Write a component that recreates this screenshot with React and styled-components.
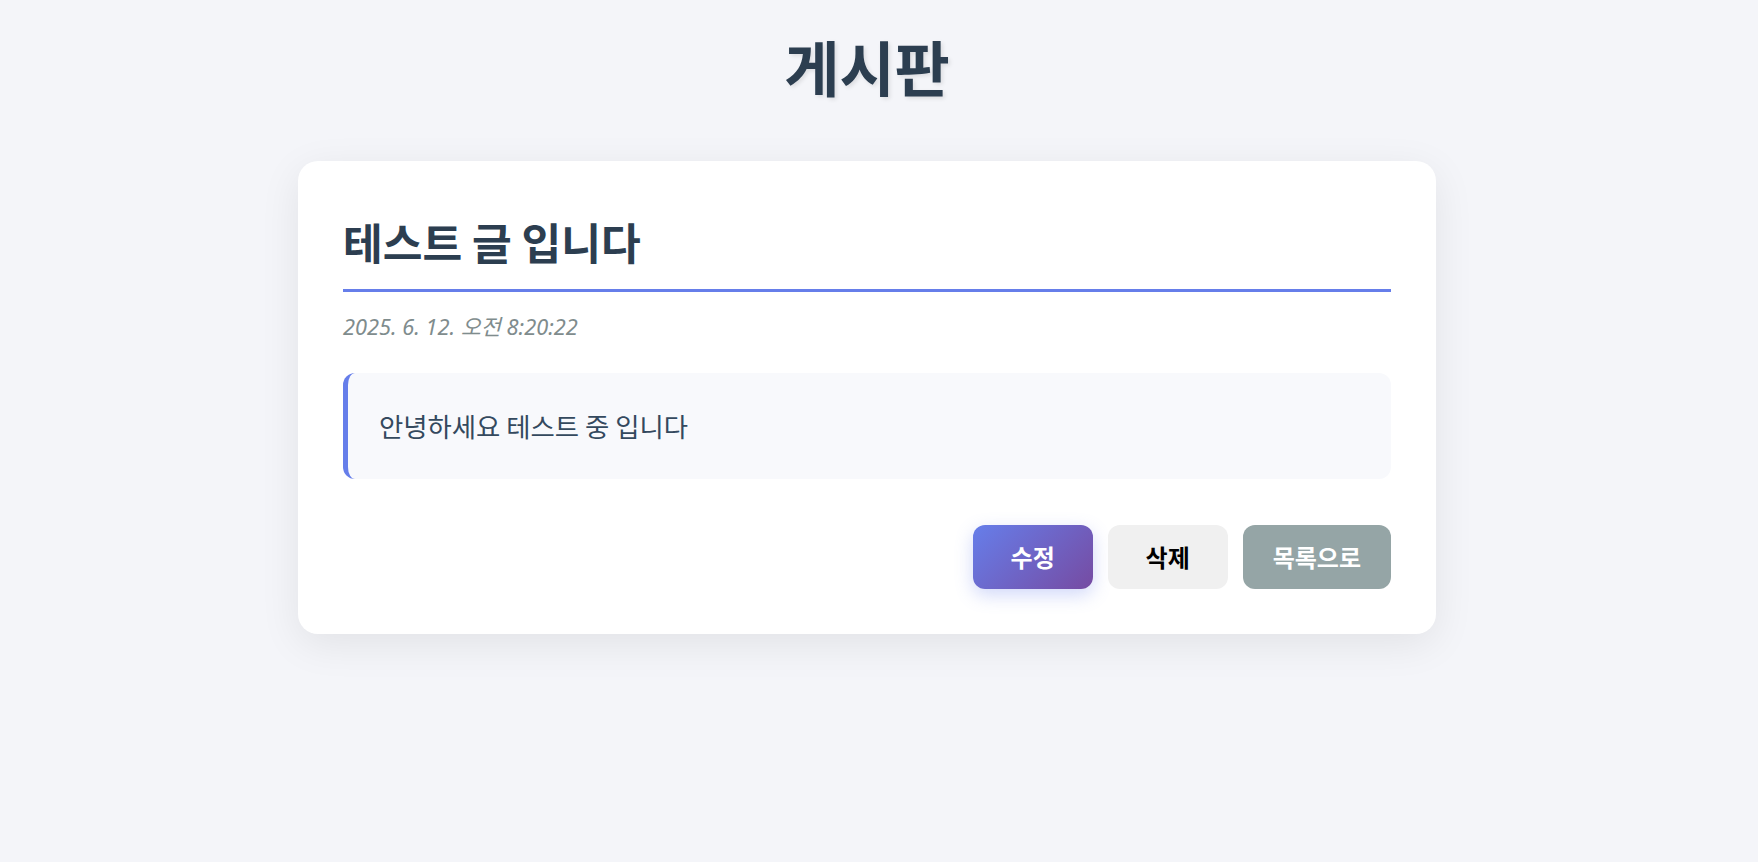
import React from 'react';
import styled, { createGlobalStyle } from 'styled-components';

const GlobalStyle = createGlobalStyle`
  html, body {
    margin: 0;
    padding: 0;
    background: #f4f5f9;
  }
  body {
    font-family: "Noto Sans", "Noto Sans CJK KR", sans-serif;
    color: #2c3e50;
  }
  * {
    box-sizing: border-box;
  }
`;

const Page = styled.div`
  min-height: 862px;
  display: flex;
  flex-direction: column;
  align-items: center;
  padding: 24px 24px 0 0;
`;

const Heading = styled.h1`
  margin: 0 0 53px;
  font-family: "Noto Sans CJK KR", sans-serif;
  font-size: 60px;
  line-height: 84px;
  font-weight: 700;
  color: #2c3e50;
  text-shadow: 2px 2px 4px rgba(0, 0, 0, 0.1);
`;

const Card = styled.article`
  width: 1138px;
  background: #ffffff;
  border-radius: 20px;
  padding: 45px;
  box-shadow: 0 10px 40px rgba(0, 0, 0, 0.08);
`;

const PostTitle = styled.h2`
  margin: 0;
  padding: 2px 0 15px;
  font-family: "Noto Sans CJK KR", sans-serif;
  font-size: 43.2px;
  line-height: 66px;
  font-weight: 700;
  color: #2c3e50;
  border-bottom: 3px solid #667eea;
`;

const PostDate = styled.div`
  margin-top: 20px;
  font-size: 21.8px;
  line-height: 29px;
  font-style: italic;
  color: #7f8c8d;
`;

const PostBody = styled.div`
  margin-top: 32px;
  background: #f8f9fc;
  border-left: 5px solid #667eea;
  border-radius: 12px;
  padding: 32px 31px;
  font-family: "Noto Sans CJK KR", sans-serif;
  font-size: 26.4px;
  line-height: 42px;
  color: #34495e;
`;

const Actions = styled.div`
  margin-top: 46px;
  display: flex;
  justify-content: flex-end;
  gap: 15px;
`;

const Button = styled.button`
  min-width: 120px;
  height: 64px;
  padding: 0 30px;
  border: none;
  border-radius: 12px;
  font-family: "Noto Sans CJK KR", sans-serif;
  font-size: 24px;
  line-height: 28px;
  font-weight: 700;
  cursor: pointer;
  color: ${({ variant }) => (variant === 'delete' ? '#000000' : '#ffffff')};
  background: ${({ variant }) =>
    variant === 'edit'
      ? 'linear-gradient(135deg, #667eea 0%, #764ba2 100%)'
      : variant === 'delete'
      ? '#f0f0f0'
      : '#95a5a6'};
  box-shadow: ${({ variant }) =>
    variant === 'edit' ? '0 6px 18px rgba(102, 126, 234, 0.3)' : 'none'};
`;

const post = {
  title: '테스트 글 입니다',
  date: '2025. 6. 12. 오전 8:20:22',
  content: '안녕하세요 테스트 중 입니다',
};

export default function App() {
  return (
    <>
      <GlobalStyle />
      <Page>
        <Heading>게시판</Heading>
        <Card>
          <PostTitle>{post.title}</PostTitle>
          <PostDate>{post.date}</PostDate>
          <PostBody>{post.content}</PostBody>
          <Actions>
            <Button variant="edit">수정</Button>
            <Button variant="delete">삭제</Button>
            <Button variant="list">목록으로</Button>
          </Actions>
        </Card>
      </Page>
    </>
  );
}
